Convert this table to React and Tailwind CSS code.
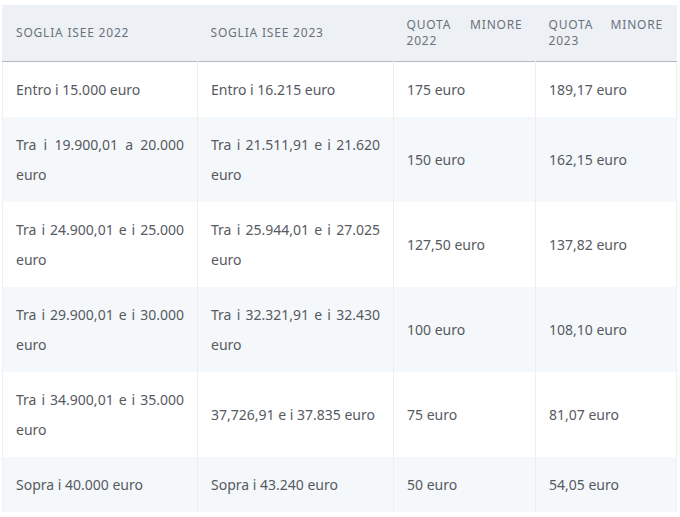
const rows = [
  ['Entro i 15.000 euro', 'Entro i 16.215 euro', '175 euro', '189,17 euro'],
  ['Tra i 19.900,01 a 20.000 euro', 'Tra i 21.511,91 e i 21.620 euro', '150 euro', '162,15 euro'],
  ['Tra i 24.900,01 e i 25.000 euro', 'Tra i 25.944,01 e i 27.025 euro', '127,50 euro', '137,82 euro'],
  ['Tra i 29.900,01 e i 30.000 euro', 'Tra i 32.321,91 e i 32.430 euro', '100 euro', '108,10 euro'],
  ['Tra i 34.900,01 e i 35.000 euro', '37,726,91 e i 37.835 euro', '75 euro', '81,07 euro'],
  ['Sopra i 40.000 euro', 'Sopra i 43.240 euro', '50 euro', '54,05 euro'],
];

const heads = ['SOGLIA ISEE 2022', 'SOGLIA ISEE 2023', 'QUOTA MINORE 2022', 'QUOTA MINORE 2023'];

export default function App() {
  return (
    <div className="w-[680px] h-[517px] bg-white pt-[5px] pl-[2px]" style={{ fontFamily: '"Noto Sans", sans-serif' }}>
      <table className="w-[674px] table-fixed border-collapse border-x border-[#eef1f4]">
        <colgroup>
          <col className="w-[195px]" />
          <col className="w-[196px]" />
          <col className="w-[142px]" />
          <col className="w-[141px]" />
        </colgroup>
        <thead>
          <tr className="bg-[#edf1f5] border-b border-[#aeb7c2]">
            {heads.map((h) => (
              <th
                key={h}
                className="h-[56px] px-[13px] py-3 text-justify align-middle font-normal text-[12px] leading-4 tracking-[0.8px] text-[#6a717b]"
              >
                {h}
              </th>
            ))}
          </tr>
        </thead>
        <tbody>
          {rows.map((r, i) => (
            <tr key={i} className={i % 2 === 1 ? 'bg-[#f5f8fb]' : 'bg-white'}>
              {r.map((c, j) => (
                <td
                  key={j}
                  className={`px-[13px] py-[12.5px] align-middle text-justify text-[14px] leading-[30px] text-[#565a5f] ${j > 0 ? 'border-l border-[#eceef0]' : ''}`}
                >
                  {c}
                </td>
              ))}
            </tr>
          ))}
        </tbody>
      </table>
    </div>
  );
}
